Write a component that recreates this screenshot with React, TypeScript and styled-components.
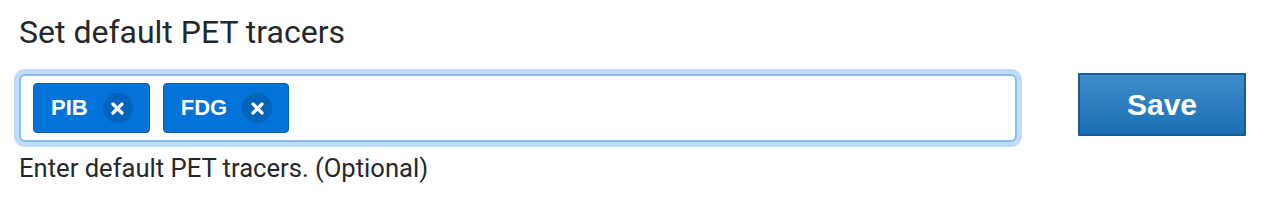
import React from 'react';
import styled, { createGlobalStyle } from 'styled-components';

const GlobalStyle = createGlobalStyle`
  html, body {
    margin: 0;
    padding: 0;
    background: #ffffff;
  }
`;

const Page = styled.div`
  padding: 13px 0 0 19px;
  width: 1274px;
  box-sizing: border-box;
`;

const Title = styled.div`
  font-family: Roboto, 'Liberation Sans', sans-serif;
  font-size: 32px;
  line-height: 38px;
  color: #25272b;
`;

const Row = styled.div`
  display: flex;
  align-items: flex-start;
  margin-top: 23px;
`;

const Field = styled.div`
  display: flex;
  flex-direction: column;
  width: 998px;
`;

const TagBox = styled.div`
  box-sizing: border-box;
  height: 68px;
  border: 2px solid #86bdf6;
  border-radius: 6px;
  box-shadow: 0 0 0 5px #bfdcfd;
  padding: 0 12px;
  display: flex;
  align-items: center;
  gap: 13px;
  background: #fff;
`;

const Tag = styled.div`
  box-sizing: border-box;
  height: 50px;
  display: flex;
  align-items: center;
  gap: 15px;
  padding: 0 16px 0 17px;
  background: #0273d8;
  border: 1px solid #0c5ea6;
  border-radius: 4px;
  color: #fff;
  font-family: 'Liberation Sans', Arial, sans-serif;
  font-weight: bold;
  font-size: 22px;
`;

const Remove = styled.span`
  width: 30px;
  height: 30px;
  border-radius: 50%;
  background: #0064ba;
  display: flex;
  align-items: center;
  justify-content: center;
`;

const Help = styled.div`
  margin-top: 11px;
  font-family: Roboto, 'Liberation Sans', sans-serif;
  font-size: 25.6px;
  line-height: 31px;
  color: #25272b;
`;

const SaveButton = styled.button`
  margin-left: 61px;
  margin-top: -1px;
  width: 168px;
  height: 63px;
  box-sizing: border-box;
  border: 2px solid #195a96;
  border-radius: 1px;
  background: linear-gradient(to bottom, #3d8cca, #1c6fb5);
  color: #fff;
  font-family: 'Liberation Sans', Arial, sans-serif;
  font-weight: bold;
  font-size: 30px;
  padding: 0;
  cursor: pointer;
`;

const Cross = () => (
  <svg width="13" height="13" viewBox="0 0 13 13">
    <path d="M2 2 L11 11 M11 2 L2 11" stroke="#fff" strokeWidth="3.2" strokeLinecap="round" />
  </svg>
);

const tracers = ['PIB', 'FDG'];

export default function App() {
  return (
    <Page>
      <GlobalStyle />
      <Title>Set default PET tracers</Title>
      <Row>
        <Field>
          <TagBox>
            {tracers.map((t) => (
              <Tag key={t}>
                {t}
                <Remove>
                  <Cross />
                </Remove>
              </Tag>
            ))}
          </TagBox>
          <Help>Enter default PET tracers. (Optional)</Help>
        </Field>
        <SaveButton>Save</SaveButton>
      </Row>
    </Page>
  );
}
